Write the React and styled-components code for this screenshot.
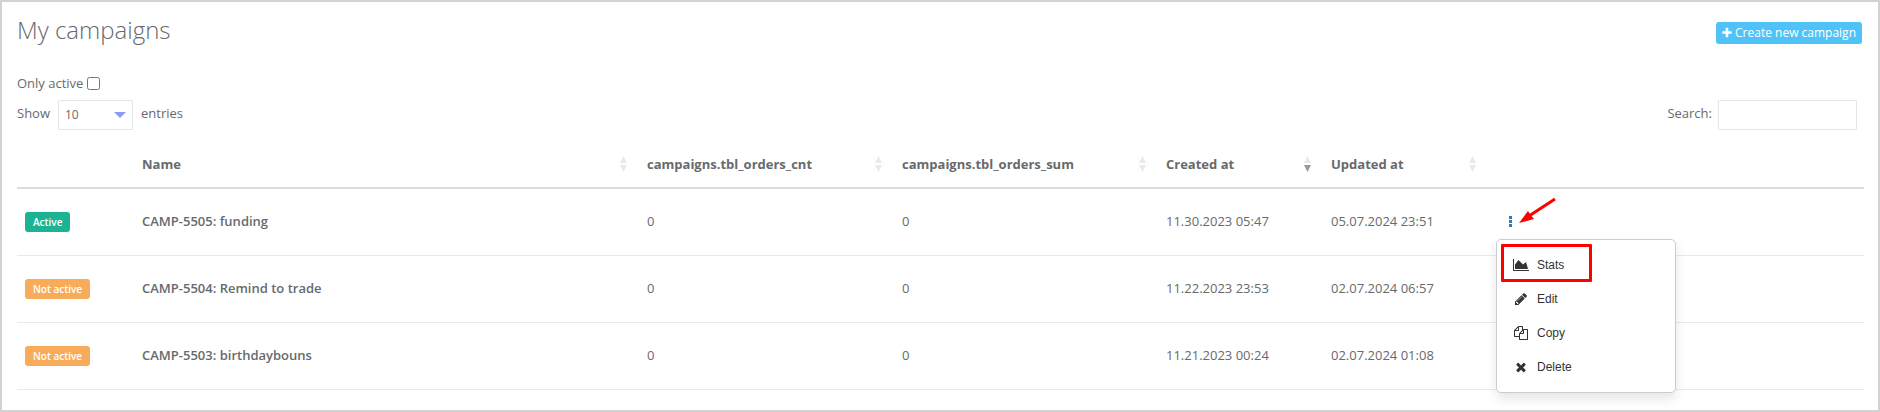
import React, { useState } from "react";
import styled, { createGlobalStyle } from "styled-components";

const GlobalStyle = createGlobalStyle`
  * {
    box-sizing: border-box;
  }

  body {
    margin: 0;
    background: #fff;
    color: #676a6c;
    font-family: "Open Sans", "Liberation Sans", sans-serif;
    font-size: 13px;
    line-height: 18px;
  }

  input,
  select,
  button {
    font: inherit;
    color: inherit;
  }
`;

const Page = styled.main`
  min-height: 100vh;
  padding: 12px 14px 0 15px;
  border: 2px solid #d3d3d3;
`;

const Header = styled.header`
  display: flex;
  justify-content: space-between;
  align-items: center;
  padding-right: 2px;
`;

const Title = styled.h1`
  margin: 0;
  font-size: 24px;
  font-weight: 300;
  line-height: 32px;
`;

const CreateButton = styled.button`
  display: flex;
  align-items: center;
  gap: 2px;
  height: 22px;
  margin-top: 6px;
  padding: 0 6px 0 5px;
  border: 0;
  border-radius: 3px;
  background: #4fc3f7;
  color: #fff;
  font-size: 12px;
  cursor: pointer;
`;

const ActiveFilter = styled.label`
  display: flex;
  width: fit-content;
  align-items: center;
  gap: 4px;
  margin-top: 28px;

  input {
    width: 13px;
    height: 13px;
    margin: 0;
  }
`;

const Toolbar = styled.div`
  display: flex;
  justify-content: space-between;
  margin-top: 8px;
  padding-right: 7px;
`;

const Field = styled.label`
  display: flex;
  gap: ${props => props.$gap};
  line-height: 26px;
`;

const SelectWrap = styled.span`
  display: grid;
  align-items: center;

  > * {
    grid-area: 1 / 1;
  }

  svg {
    justify-self: end;
    margin-right: 7px;
    pointer-events: none;
  }
`;

const LengthSelect = styled.select`
  appearance: none;
  width: 75px;
  height: 30px;
  padding: 0 6px;
  border: 1px solid #e5e6e7;
  border-radius: 1px;
  background: #fff;
  font-size: 12px;
`;

const SearchInput = styled.input`
  width: 139px;
  height: 30px;
  padding: 0 6px;
  border: 1px solid #e5e6e7;
  border-radius: 1px;
`;

const Table = styled.table`
  width: 100%;
  margin-top: 10px;
  border-collapse: separate;
  border-spacing: 0;
  table-layout: fixed;
`;

const Column = styled.col`
  width: ${props => props.$width};
`;

const HeadCell = styled.th`
  height: 49px;
  padding: 0 12px 0 8px;
  border-bottom: 2px solid #dddddd;
  text-align: left;
  font-weight: 700;
`;

const SortButton = styled.button`
  display: flex;
  width: 100%;
  justify-content: space-between;
  align-items: center;
  padding: 0;
  border: 0;
  background: none;
  cursor: pointer;
`;

const Cell = styled.td`
  position: relative;
  height: 67px;
  padding: 0 8px 2px;
  border-bottom: 1px solid #e7eaec;
  font-weight: ${props => (props.$strong ? 600 : 400)};
`;

const StatusCell = styled(Cell)`
  padding-bottom: 0;
`;

const Badge = styled.span`
  display: block;
  width: fit-content;
  padding: 1px 8px;
  border-radius: 3px;
  background: ${props => (props.$active ? "#1ab394" : "#f8ac59")};
  color: #fff;
  font-size: 10px;
  font-weight: 600;
`;

const MoreButton = styled.button`
  display: flex;
  justify-content: center;
  width: 15px;
  margin-left: 7px;
  padding: 4px 0;
  border: 0;
  background: none;
  color: #337ab7;
  cursor: pointer;
`;

const Menu = styled.ul`
  position: absolute;
  z-index: 1;
  top: 50px;
  left: 8px;
  width: 180px;
  margin: 0;
  padding: 8px 0;
  border: 1px solid #cccccc;
  border-radius: 5px;
  background: #fff;
  box-shadow: 0 6px 12px rgba(0, 0, 0, 0.1);
  list-style: none;
`;

const MenuItem = styled.button`
  display: flex;
  align-items: center;
  gap: 8px;
  width: 100%;
  height: 34px;
  padding: 0 16px;
  border: 0;
  background: none;
  color: #333;
  font-family: "Liberation Sans", Arial, sans-serif;
  font-size: 12px;
  cursor: pointer;
`;

const IconBox = styled.span`
  display: flex;
  justify-content: center;
  width: 16px;
`;

const Highlight = styled.li`
  position: absolute;
  top: 4px;
  left: 4px;
  width: 91px;
  height: 38px;
  border: 3px solid #ff0000;
  border-radius: 1px;
  pointer-events: none;
`;

const Pointer = styled.svg`
  position: absolute;
  top: 7px;
  left: 30px;
  pointer-events: none;
`;

const icons = {
  plus:
    "M1600 736v192q0 40-28 68t-68 28h-416v416q0 40-28 68t-68 28h-192q-40 0-68-28t-28-68v-416h-416q-40 0-68-28t-28-68v-192q0-40 28-68t68-28h416v-416q0-40 28-68t68-28h192q40 0 68 28t28 68v416h416q40 0 68 28t28 68z",
  chart:
    "M2048 1536v128h-2048v-1536h128v1408h1920zm-384-1024l256 896h-1664v-576l448-576 576 576z",
  pencil:
    "M491 1536l91-91-235-235-91 91v107h128v128h107zm523-928q0-22-22-22-10 0-17 7l-542 542q-7 7-7 17 0 22 22 22 10 0 17-7l542-542q7-7 7-17zm-54-192l416 416-832 832h-416v-416zm683 96q0 53-37 90l-166 166-416-416 166-165q36-38 90-38 53 0 91 38l235 234q37 39 37 91z",
  copy:
    "M1696 384q40 0 68 28t28 68v1216q0 40-28 68t-68 28h-960q-40 0-68-28t-28-68v-288h-544q-40 0-68-28t-28-68v-672q0-40 20-88t48-76l408-408q28-28 76-48t88-20h416q40 0 68 28t28 68v328q68-40 128-40h416zm-544 213l-299 299h299v-299zm-640-384l-299 299h299v-299zm196 647l316-316v-416h-384v416q0 40-28 68t-68 28h-416v640h512v-256q0-40 20-88t48-76zm956 804v-1152h-384v416q0 40-28 68t-68 28h-416v640h896z",
  times:
    "M1490 1322q0 40-28 68l-136 136q-28 28-68 28t-68-28l-294-294-294 294q-28 28-68 28t-68-28l-136-136q-28-28-28-68t28-68l294-294-294-294q-28-28-28-68t28-68l136-136q28-28 68-28t68 28l294 294 294-294q28-28 68-28t68 28l136 136q28 28 28 68t-28 68l-294 294 294 294q28 28 28 68z"
};

const Icon = ({ name, size = 14, wide }) => (
  <svg
    width={wide ? 16 : size}
    height={size}
    viewBox={wide ? "0 0 2048 1792" : "0 0 1792 1792"}
    fill="currentColor"
    aria-hidden="true"
  >
    <path d={icons[name]} />
  </svg>
);

const SortIcon = ({ sorted }) => (
  <svg width="7" height="16" viewBox="0 0 7 16" aria-hidden="true">
    <path d="M3.5 0L7 7H0z" fill="#e9e9e9" />
    <path d="M0 9h7l-3.5 7z" fill={sorted ? "#999" : "#e9e9e9"} />
  </svg>
);

const columns = [
  { key: "name", label: "Name" },
  { key: "orders", label: "campaigns.tbl_orders_cnt" },
  { key: "sum", label: "campaigns.tbl_orders_sum" },
  { key: "created", label: "Created at" },
  { key: "updated", label: "Updated at" }
];

const widths = ["117px", "auto", "255px", "264px", "165px", "165px", "376px"];

const campaigns = [
  {
    id: 5505,
    active: true,
    name: "CAMP-5505: funding",
    orders: 0,
    sum: 0,
    created: "11.30.2023 05:47",
    updated: "05.07.2024 23:51"
  },
  {
    id: 5504,
    active: false,
    name: "CAMP-5504: Remind to trade",
    orders: 0,
    sum: 0,
    created: "11.22.2023 23:53",
    updated: "02.07.2024 06:57"
  },
  {
    id: 5503,
    active: false,
    name: "CAMP-5503: birthdaybouns",
    orders: 0,
    sum: 0,
    created: "11.21.2023 00:24",
    updated: "02.07.2024 01:08"
  }
];

const actions = [
  { icon: "chart", label: "Stats", wide: true },
  { icon: "pencil", label: "Edit" },
  { icon: "copy", label: "Copy" },
  { icon: "times", label: "Delete" }
];

const ActionMenu = () => (
  <>
    <Pointer width="42" height="30" viewBox="0 0 42 30" aria-hidden="true">
      <path d="M37 3L11 20" stroke="#ff0000" strokeWidth="3" />
      <path d="M1 27L10 15L12 18L16 23z" fill="#ff0000" />
    </Pointer>
    <Menu>
      {actions.map(action => (
        <li key={action.label}>
          <MenuItem type="button">
            <IconBox>
              <Icon name={action.icon} wide={action.wide} />
            </IconBox>
            {action.label}
          </MenuItem>
        </li>
      ))}
      <Highlight aria-hidden="true" />
    </Menu>
  </>
);

const App = () => {
  const [onlyActive, setOnlyActive] = useState(false);
  const [search, setSearch] = useState("");
  const [sortBy, setSortBy] = useState("created");
  const [openMenu, setOpenMenu] = useState(5505);

  const rows = campaigns
    .filter(row => !onlyActive || row.active)
    .filter(row => row.name.toLowerCase().includes(search.toLowerCase()))
    .sort((a, b) => String(b[sortBy]).localeCompare(String(a[sortBy])));

  return (
    <Page>
      <GlobalStyle />
      <Header>
        <Title>My campaigns</Title>
        <CreateButton type="button">
          <Icon name="plus" size={12} />
          Create new campaign
        </CreateButton>
      </Header>

      <ActiveFilter>
        Only active
        <input
          type="checkbox"
          checked={onlyActive}
          onChange={e => setOnlyActive(e.target.checked)}
        />
      </ActiveFilter>

      <Toolbar>
        <Field $gap="8px">
          Show
          <SelectWrap>
            <LengthSelect defaultValue="10">
              <option>10</option>
              <option>25</option>
              <option>50</option>
            </LengthSelect>
            <svg width="12" height="6" viewBox="0 0 12 6" aria-hidden="true">
              <path d="M0 0h12L6 6z" fill="#8c9bf5" />
            </svg>
          </SelectWrap>
          entries
        </Field>
        <Field $gap="6px">
          Search:
          <SearchInput
            type="search"
            value={search}
            onChange={e => setSearch(e.target.value)}
          />
        </Field>
      </Toolbar>

      <Table>
        <colgroup>
          {widths.map((width, i) => (
            <Column key={i} $width={width} />
          ))}
        </colgroup>
        <thead>
          <tr>
            <HeadCell />
            {columns.map(column => (
              <HeadCell key={column.key}>
                <SortButton type="button" onClick={() => setSortBy(column.key)}>
                  {column.label}
                  <SortIcon sorted={sortBy === column.key} />
                </SortButton>
              </HeadCell>
            ))}
            <HeadCell />
          </tr>
        </thead>
        <tbody>
          {rows.map(row => (
            <tr key={row.id}>
              <StatusCell>
                <Badge $active={row.active}>
                  {row.active ? "Active" : "Not active"}
                </Badge>
              </StatusCell>
              <Cell $strong>{row.name}</Cell>
              <Cell>{row.orders}</Cell>
              <Cell>{row.sum}</Cell>
              <Cell>{row.created}</Cell>
              <Cell>{row.updated}</Cell>
              <Cell>
                {row.active && (
                  <MoreButton
                    type="button"
                    aria-label="Actions"
                    onClick={() =>
                      setOpenMenu(openMenu === row.id ? null : row.id)
                    }
                  >
                    <svg width="3" height="11" viewBox="0 0 3 11" fill="currentColor">
                      <path d="M0 0h3v3H0zM0 4h3v3H0zM0 8h3v3H0z" />
                    </svg>
                  </MoreButton>
                )}
                {openMenu === row.id && <ActionMenu />}
              </Cell>
            </tr>
          ))}
        </tbody>
      </Table>
    </Page>
  );
};

export default App;
